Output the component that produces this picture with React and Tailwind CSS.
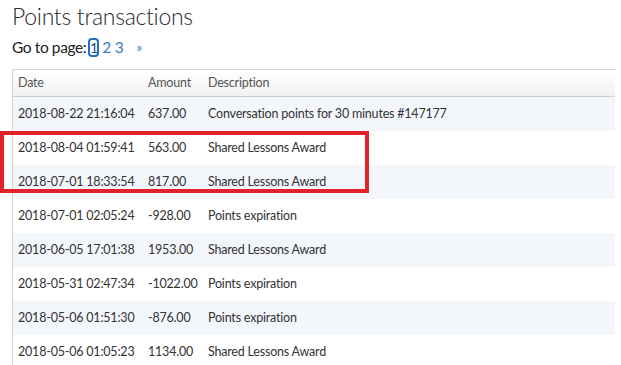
import React from "react";

const rows = [
  ["2018-08-22 21:16:04", "637.00", "Conversation points for 30 minutes #147177"],
  ["2018-08-04 01:59:41", "563.00", "Shared Lessons Award"],
  ["2018-07-01 18:33:54", "817.00", "Shared Lessons Award"],
  ["2018-07-01 02:05:24", "-928.00", "Points expiration"],
  ["2018-06-05 17:01:38", "1953.00", "Shared Lessons Award"],
  ["2018-05-31 02:47:34", "-1022.00", "Points expiration"],
  ["2018-05-06 01:51:30", "-876.00", "Points expiration"],
  ["2018-05-06 01:05:23", "1134.00", "Shared Lessons Award"],
];

export default function App() {
  return (
    <div className="relative h-[365px] w-[621px] overflow-hidden bg-white font-['Lato',sans-serif] text-[#333]">
      <h1 className="pl-3 pt-[2px] text-[23px] font-light leading-[28px] tracking-[-0.3px] text-[#2a2a2a]">
        Points transactions
      </h1>

      {/* pagination */}
      <div className="mt-[8px] flex h-[19px] items-center pl-3 text-[15.5px] tracking-[-0.4px] text-[#222]">
        <span>Go to page:</span>
        <span className="ml-[2px] flex h-[19px] w-[11px] items-center justify-center rounded-[4px] border-[2.5px] border-[#1f6fc5] text-[14px] leading-none text-[#1f4f8a]">
          1
        </span>
        <span className="ml-[3px] text-[#3b7dc8]">2</span>
        <span className="ml-[4px] text-[#3b7dc8]">3</span>
        <span className="ml-[13px] text-[13px] text-[#3b7dc8]">»</span>
      </div>

      {/* table */}
      <div className="ml-3 mt-[12px] w-[603px] whitespace-nowrap border-l border-t border-[#d4d4d4] text-[12.5px] tracking-[-0.2px]">
        <div className="flex h-[27px] items-center border-b border-[#cfcfcf] bg-gradient-to-b from-white to-[#f1f1f1] text-[#555]">
          <div className="w-[135px] pl-[5px]">Date</div>
          <div className="w-[60px]">Amount</div>
          <div>Description</div>
        </div>
        {rows.map((r, i) => (
          <div
            key={i}
            className={
              "flex h-[34px] items-center text-[#333] " +
              (i % 2 === 0 ? "bg-[#f3f6fb]" : "bg-white")
            }
          >
            <div className="w-[135px] pl-[5px]">{r[0]}</div>
            <div className="w-[60px]">{r[1]}</div>
            <div>{r[2]}</div>
          </div>
        ))}
      </div>

      {/* highlight box */}
      <div className="pointer-events-none absolute left-0 top-[131px] h-[62px] w-[369px] border-[4px] border-[#e3212b]" />
    </div>
  );
}
